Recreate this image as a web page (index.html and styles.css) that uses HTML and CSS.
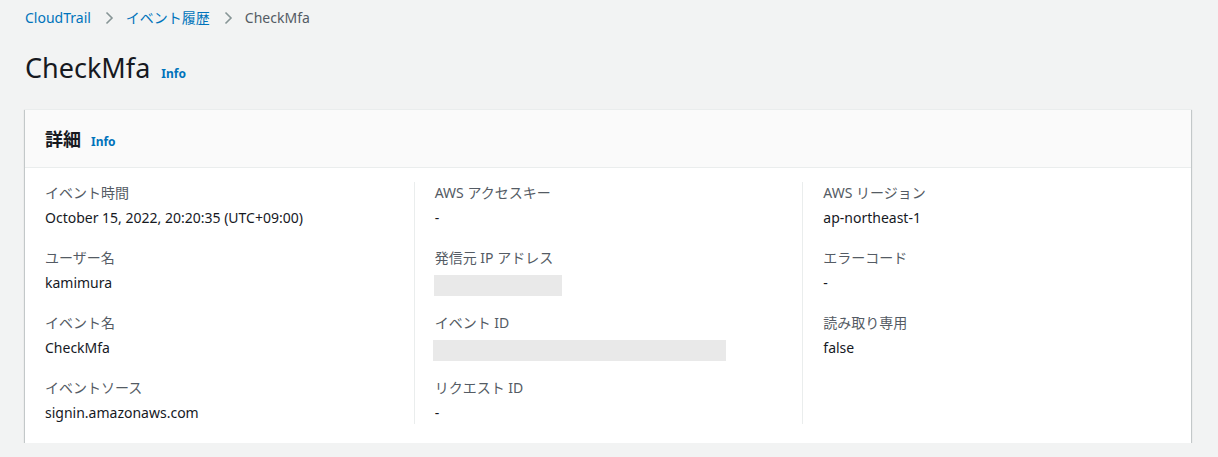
FILE: index.html
```html
<!DOCTYPE html>
<html lang="ja">
<head>
<meta charset="utf-8">
<title>CheckMfa</title>
<link rel="stylesheet" href="styles.css">
</head>
<body>
<div class="page">
  <nav class="breadcrumb">
    <a class="crumb-link" href="#">CloudTrail</a>
    <svg class="chev" width="16" height="16" viewBox="0 0 16 16"><path d="M5.5 2.5 L11 8 L5.5 13.5" fill="none" stroke="#879596" stroke-width="1.6"/></svg>
    <a class="crumb-link" href="#">イベント履歴</a>
    <svg class="chev" width="16" height="16" viewBox="0 0 16 16"><path d="M5.5 2.5 L11 8 L5.5 13.5" fill="none" stroke="#879596" stroke-width="1.6"/></svg>
    <span class="crumb-current">CheckMfa</span>
  </nav>

  <div class="page-header">
    <h1 class="page-title">CheckMfa</h1>
    <a class="info" href="#">Info</a>
  </div>

  <section class="card">
    <div class="card-header">
      <h2 class="card-title">詳細</h2>
      <a class="info" href="#">Info</a>
    </div>
    <div class="card-body">
      <div class="col">
        <div class="item"><div class="label">イベント時間</div><div class="value">October 15, 2022, 20:20:35 (UTC+09:00)</div></div>
        <div class="item"><div class="label">ユーザー名</div><div class="value">kamimura</div></div>
        <div class="item"><div class="label">イベント名</div><div class="value">CheckMfa</div></div>
        <div class="item"><div class="label">イベントソース</div><div class="value">signin.amazonaws.com</div></div>
      </div>
      <div class="col col-divided">
        <div class="item"><div class="label">AWS アクセスキー</div><div class="value">-</div></div>
        <div class="item"><div class="label">発信元 IP アドレス</div><div class="value"><span class="redact redact-ip"></span></div></div>
        <div class="item"><div class="label">イベント ID</div><div class="value"><span class="redact redact-id"></span></div></div>
        <div class="item"><div class="label">リクエスト ID</div><div class="value">-</div></div>
      </div>
      <div class="col col-divided">
        <div class="item"><div class="label">AWS リージョン</div><div class="value">ap-northeast-1</div></div>
        <div class="item"><div class="label">エラーコード</div><div class="value">-</div></div>
        <div class="item"><div class="label">読み取り専用</div><div class="value">false</div></div>
      </div>
    </div>
  </section>
</div>
</body>
</html>
```

FILE: styles.css
```css
* { box-sizing: border-box; }
html, body {
  margin: 0;
  padding: 0;
  background: #f2f3f3;
}
body {
  font-family: "Noto Sans", "Noto Sans CJK JP", sans-serif;
  font-size: 14px;
  line-height: 22px;
  color: #16191f;
}
.page {
  padding: 7px 27px 0 25px;
}
.breadcrumb {
  display: flex;
  align-items: center;
  height: 22px;
  gap: 0;
}
.crumb-link {
  color: #0073bb;
  text-decoration: none;
}
.chev {
  margin: 0 9px 0 10px;
}
.crumb-current {
  color: #545b64;
}
.page-header {
  display: flex;
  align-items: baseline;
  margin-top: 21px;
  height: 44px;
}
.page-title {
  margin: 0;
  font-size: 27px;
  line-height: 36px;
  font-weight: 400;
  color: #16191f;
}
.info {
  color: #0073bb;
  font-size: 12px;
  font-weight: 700;
  text-decoration: none;
  margin-left: 11px;
}
.card {
  margin-top: 15px;
  background: #fff;
  box-shadow: 0 1px 1px 0 rgba(0,28,36,.3), 1px 1px 1px 0 rgba(0,28,36,.15), -1px 1px 1px 0 rgba(0,28,36,.15);
  border-top: 1px solid #eaeded;
}
.card-header {
  display: flex;
  align-items: baseline;
  background: #fafafa;
  border-bottom: 1px solid #eaeded;
  padding: 15px 20px 14px;
  height: 58px;
}
.card-title {
  margin: 0;
  font-size: 18px;
  line-height: 28px;
  font-weight: 700;
  color: #16191f;
}
.card-title + .info {
  margin-left: 10px;
}
.card-body {
  display: grid;
  grid-template-columns: repeat(3, 1fr);
  padding: 14px 0 19px;
}
.col {
  padding: 0 20px;
  display: flex;
  flex-direction: column;
  gap: 18px;
}
.col-divided {
  border-left: 1px solid #eaeded;
}
.item {
  display: flex;
  flex-direction: column;
  gap: 3px;
}
.label {
  color: #545b64;
}
.value {
  color: #16191f;
  height: 22px;
}
.redact {
  display: inline-block;
  height: 21px;
  background: #e9e9e9;
  vertical-align: top;
  margin-top: 3px;
  margin-left: -1px;
}
.redact-ip { width: 128px; }
.redact-id { width: 293px; margin-left: -2px; }
```
